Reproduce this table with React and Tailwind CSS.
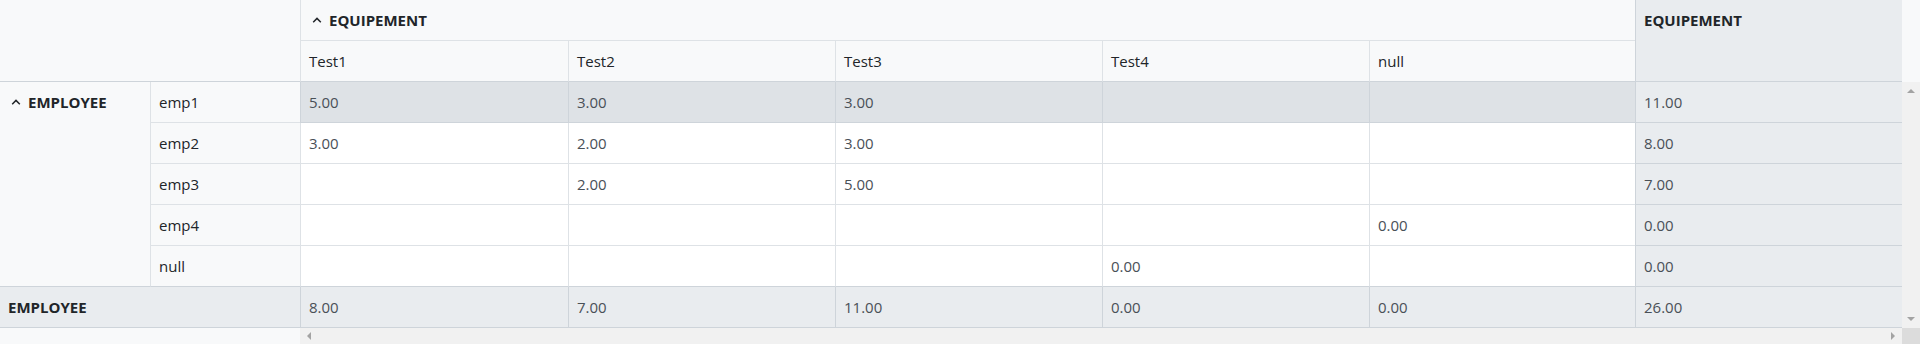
import React from "react";

const COLS = "grid grid-cols-[150px_150px_268px_267px_267px_267px_266px_267px]";
const TESTS = ["Test1", "Test2", "Test3", "Test4", "null"];

const rows = [
  { name: "emp1", values: ["5.00", "3.00", "3.00", "", ""], total: "11.00", active: true },
  { name: "emp2", values: ["3.00", "2.00", "3.00", "", ""], total: "8.00" },
  { name: "emp3", values: ["", "2.00", "5.00", "", ""], total: "7.00" },
  { name: "emp4", values: ["", "", "", "", "0.00"], total: "0.00" },
  { name: "null", values: ["", "", "", "0.00", ""], total: "0.00" },
];

const totals = ["8.00", "7.00", "11.00", "0.00", "0.00"];

const Caret = () => (
  <svg width="10" height="6" viewBox="0 0 10 6" className="shrink-0">
    <path d="M1.2 5.2 L5 1.4 L8.8 5.2" fill="none" stroke="#212529" strokeWidth="1.5" />
  </svg>
);

const Triangle = ({ dir }) => {
  const pts = {
    up: "0,5 4,1 8,5",
    down: "0,1 4,5 8,1",
    left: "5,0 1,4 5,8",
    right: "1,0 5,4 1,8",
  }[dir];
  const size = dir === "up" || dir === "down" ? { w: 8, h: 6 } : { w: 6, h: 8 };
  return (
    <svg width={size.w} height={size.h} viewBox={`0 0 ${size.w} ${size.h}`}>
      <polygon points={pts} fill="#a3a3a3" />
    </svg>
  );
};

export default function App() {
  return (
    <div className="w-[1920px] h-[344px] flex flex-col bg-white overflow-hidden font-['Open_Sans',sans-serif] text-[15px] leading-[20px] text-[#212529]">
      {/* header */}
      <div className="flex">
        <div className={`${COLS} grid-rows-[41px_41px]`}>
          <div className="col-span-2 row-span-2 bg-[#f8f9fa] border-b border-[#ced4da]" />
          <div className="col-span-5 flex items-center gap-[7px] pl-[11px] bg-[#f8f9fa] border-l border-b border-[#dee2e6] font-bold">
            <Caret />
            <span>EQUIPEMENT</span>
          </div>
          <div className="row-span-2 pl-2 pt-[10px] bg-[#e9ecef] border-l border-b border-[#ced4da] font-bold">
            EQUIPEMENT
          </div>
          {TESTS.map((t) => (
            <div
              key={t}
              className="flex items-center pl-2 bg-[#f8f9fa] border-l border-b border-l-[#dee2e6] border-b-[#ced4da]"
            >
              {t}
            </div>
          ))}
        </div>
        <div className="w-[18px] bg-[#f8f9fa]" />
      </div>

      {/* body */}
      <div className="flex">
        <div className={`${COLS} grid-rows-[41px_41px_41px_41px_41px_41px]`}>
          <div className="row-span-5 flex items-start gap-[7px] pl-[11px] pt-[10px] bg-[#f8f9fa] border-b border-[#ced4da] font-bold">
            <span className="h-[20px] flex items-center">
              <Caret />
            </span>
            <span>EMPLOYEE</span>
          </div>
          {rows.map((r, i) => (
            <React.Fragment key={r.name}>
              <div
                className={`flex items-center pl-2 bg-[#f8f9fa] border-l border-b border-l-[#dee2e6] ${
                  i === 4 ? "border-b-[#ced4da]" : "border-b-[#dee2e6]"
                }`}
              >
                {r.name}
              </div>
              {r.values.map((v, j) => (
                <div
                  key={j}
                  className={`flex items-center pl-2 border-l border-b text-[#495057] ${
                    r.active
                      ? "bg-[#dee2e6] border-l-[#ced4da] border-b-[#ced4da]"
                      : i === 4
                      ? "bg-white border-l-[#dee2e6] border-b-[#ced4da]"
                      : "bg-white border-l-[#dee2e6] border-b-[#dee2e6]"
                  }`}
                >
                  {v}
                </div>
              ))}
              <div className="flex items-center pl-2 bg-[#e9ecef] border-l border-b border-l-[#ced4da] border-b-[#ced4da] text-[#495057]">
                {r.total}
              </div>
            </React.Fragment>
          ))}
          <div className="col-span-2 flex items-center pl-2 bg-[#e9ecef] border-b border-[#ced4da] font-bold">
            EMPLOYEE
          </div>
          {totals.map((v, j) => (
            <div
              key={j}
              className="flex items-center pl-2 bg-[#e9ecef] border-l border-b border-[#ced4da] text-[#495057]"
            >
              {v}
            </div>
          ))}
          <div className="flex items-center pl-2 bg-[#e9ecef] border-l border-b border-[#ced4da] text-[#495057]">
            26.00
          </div>
        </div>
        <div className="w-[18px] bg-[#f1f1f1] flex flex-col items-center justify-between pt-[6px] pb-[6px]">
          <Triangle dir="up" />
          <Triangle dir="down" />
        </div>
      </div>

      {/* horizontal scrollbar */}
      <div className="flex flex-1">
        <div className="w-[300px] bg-[#f8f9fa]" />
        <div className="flex-1 bg-[#f1f1f1] flex items-center justify-between pl-[6px] pr-[6px]">
          <Triangle dir="left" />
          <Triangle dir="right" />
        </div>
        <div className="w-[18px] bg-[#dcdcdc]" />
      </div>
    </div>
  );
}
